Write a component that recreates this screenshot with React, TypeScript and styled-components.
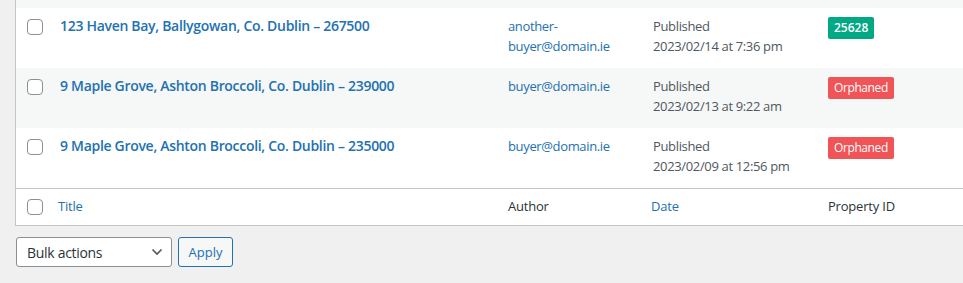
import styled, { createGlobalStyle } from "styled-components";

const GlobalStyle = createGlobalStyle`
  body {
    margin: 0;
    background: #f0f0f1;
    font-family: "Open Sans", "Noto Sans", sans-serif;
    color: #3c434a;
    overflow: hidden;
  }
`;

const Page = styled.div`
  padding-left: 15px;
  width: 963px;
  height: 283px;
  box-sizing: border-box;
  overflow: hidden;
`;

const Table = styled.div`
  width: 960px;
  border: 1px solid #c3c4c7;
  border-top: none;
  background: #fff;
`;

const COLUMNS = "34px 448px 145px 175px 1fr";

const Row = styled.div<{ $striped?: boolean }>`
  display: grid;
  grid-template-columns: ${COLUMNS};
  min-height: 60px;
  background: ${(p) => (p.$striped ? "#f6f7f7" : "#fff")};
`;

const Stub = styled.div`
  height: 8px;
  background: #f6f7f7;
`;

const Footer = styled.div`
  display: grid;
  grid-template-columns: ${COLUMNS};
  height: 36px;
  border-top: 1px solid #c3c4c7;
`;

const CheckCell = styled.div<{ $top?: number }>`
  padding: ${(p) => p.$top ?? 11}px 0 0 11px;
`;

const Checkbox = styled.span`
  display: block;
  width: 16px;
  height: 16px;
  box-sizing: border-box;
  border: 1px solid #8c8f94;
  border-radius: 4px;
  background: #fff;
`;

const Cell = styled.div`
  padding: 8px 10px;
  font-size: 13px;
  line-height: 20px;
  letter-spacing: -0.35px;
`;

const TitleLink = styled.a`
  font-size: 14px;
  font-weight: 600;
  letter-spacing: -0.3px;
  color: #2271b1;
  text-decoration: none;
  white-space: nowrap;
`;

const AuthorLink = styled.a`
  color: #2271b1;
  text-decoration: none;
  display: block;
  width: 115px;
  word-break: break-word;
`;

const DateText = styled.div`
  color: #50575e;
  white-space: nowrap;
`;

const Badge = styled.span<{ $tone: "ok" | "bad" }>`
  display: inline-block;
  margin-top: 1px;
  padding: 0 6px;
  height: 22px;
  line-height: 22px;
  font-size: 12px;
  letter-spacing: ${(p) => (p.$tone === "ok" ? "0" : "-0.4px")};
  font-weight: ${(p) => (p.$tone === "ok" ? 600 : 500)};
  color: #fff;
  border-radius: 2px;
  background: ${(p) => (p.$tone === "ok" ? "#00a884" : "#f05457")};
`;

const HeadCell = styled.div<{ $shift?: number; $link?: boolean }>`
  padding: 7px 10px 8px ${(p) => 10 + (p.$shift ?? 0)}px;
  font-size: 13px;
  line-height: 20px;
  letter-spacing: -0.2px;
  color: ${(p) => (p.$link ? "#2271b1" : "#2c3338")};
`;

const Actions = styled.div`
  display: flex;
  gap: 6px;
  margin-top: 11px;
  margin-left: 1px;
`;

const Select = styled.div`
  display: flex;
  align-items: center;
  justify-content: space-between;
  width: 156px;
  height: 30px;
  box-sizing: border-box;
  padding: 0 8px 0 10px;
  border: 1px solid #8c8f94;
  border-radius: 3px;
  background: #fff;
  font-size: 14px;
  letter-spacing: -0.3px;
  color: #2c3338;
`;

const Button = styled.button`
  height: 30px;
  width: 55px;
  padding: 0;
  border: 1px solid #2271b1;
  border-radius: 3px;
  background: #f6f7f7;
  color: #2271b1;
  font-family: inherit;
  font-size: 13px;
`;

type Post = {
  title: string;
  author: string;
  status: string;
  date: string;
  badge: string;
  ok: boolean;
};

const posts: Post[] = [
  {
    title: "123 Haven Bay, Ballygowan, Co. Dublin – 267500",
    author: "another-buyer@domain.ie",
    status: "Published",
    date: "2023/02/14 at 7:36 pm",
    badge: "25628",
    ok: true,
  },
  {
    title: "9 Maple Grove, Ashton Broccoli, Co. Dublin – 239000",
    author: "buyer@domain.ie",
    status: "Published",
    date: "2023/02/13 at 9:22 am",
    badge: "Orphaned",
    ok: false,
  },
  {
    title: "9 Maple Grove, Ashton Broccoli, Co. Dublin – 235000",
    author: "buyer@domain.ie",
    status: "Published",
    date: "2023/02/09 at 12:56 pm",
    badge: "Orphaned",
    ok: false,
  },
];

function Chevron() {
  return (
    <svg width="12" height="8" viewBox="0 0 12 8" fill="none">
      <path d="M1.5 1.5 6 6l4.5-4.5" stroke="#50575e" strokeWidth="1.6" />
    </svg>
  );
}

export default function App() {
  return (
    <Page>
      <GlobalStyle />
      <Table>
        <Stub />
        {posts.map((post, i) => (
          <Row key={i} $striped={i % 2 === 1}>
            <CheckCell>
              <Checkbox />
            </CheckCell>
            <Cell>
              <TitleLink href="#">{post.title}</TitleLink>
            </Cell>
            <Cell>
              <AuthorLink href="#">
                {post.author.startsWith("another-") ? (
                  <>
                    another-
                    <br />
                    buyer@domain.ie
                  </>
                ) : (
                  post.author
                )}
              </AuthorLink>
            </Cell>
            <Cell>
              <DateText>{post.status}</DateText>
              <DateText>{post.date}</DateText>
            </Cell>
            <Cell>
              <Badge $tone={post.ok ? "ok" : "bad"}>{post.badge}</Badge>
            </Cell>
          </Row>
        ))}
        <Footer>
          <CheckCell $top={10}>
            <Checkbox />
          </CheckCell>
          <HeadCell $shift={-2} $link>
            Title
          </HeadCell>
          <HeadCell>Author</HeadCell>
          <HeadCell $shift={-2} $link>
            Date
          </HeadCell>
          <HeadCell>Property ID</HeadCell>
        </Footer>
      </Table>
      <Actions>
        <Select>
          Bulk actions
          <Chevron />
        </Select>
        <Button>Apply</Button>
      </Actions>
    </Page>
  );
}
